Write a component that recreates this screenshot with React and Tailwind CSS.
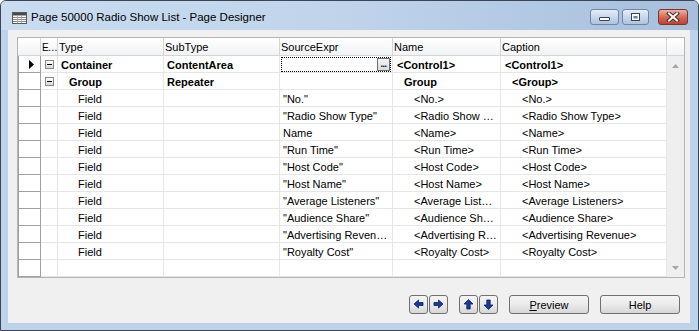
import React from "react";

const fieldRows = [
  ['"No."', "<No.>", "<No.>"],
  ['"Radio Show Type"', "<Radio Show …", "<Radio Show Type>"],
  ["Name", "<Name>", "<Name>"],
  ['"Run Time"', "<Run Time>", "<Run Time>"],
  ['"Host Code"', "<Host Code>", "<Host Code>"],
  ['"Host Name"', "<Host Name>", "<Host Name>"],
  ['"Average Listeners"', "<Average List…", "<Average Listeners>"],
  ['"Audience Share"', "<Audience Sh…", "<Audience Share>"],
  ['"Advertising Reven…', "<Advertising R…", "<Advertising Revenue>"],
  ['"Royalty Cost"', "<Royalty Cost>", "<Royalty Cost>"],
];

const cell =
  "shrink-0 h-full border-r border-b border-[#e6e6e6] bg-white flex items-center overflow-hidden whitespace-nowrap pt-[2px]";
const hcell =
  "shrink-0 h-full border-r border-b border-[#d5d5d5] flex items-center overflow-hidden whitespace-nowrap pl-[1px] pt-[1px]";

function ExpandBox() {
  return (
    <div className="w-[9px] h-[9px] border border-[#8a8a8a] bg-linear-to-b from-white to-[#d8d8d8] flex items-center justify-center">
      <div className="w-[5px] h-px bg-black" />
    </div>
  );
}

function GridRow({
  selected,
  expand,
  type,
  typePad,
  sub,
  src,
  name,
  namePad,
  cap,
  capPad,
  bold,
  focus,
}) {
  const b = bold ? "font-bold" : "";
  return (
    <div className="flex h-[17px]">
      <div className="w-[23px] shrink-0 h-full border-l border-r border-b border-[#a0a0a0] bg-white flex items-center justify-center pl-[3px]">
        {selected && (
          <svg width="5" height="9" viewBox="0 0 5 9">
            <polygon points="0,0 5,4.5 0,9" fill="#000" />
          </svg>
        )}
      </div>
      <div className="w-[17px] shrink-0 h-full border-r border-b border-[#e6e6e6] bg-white flex items-center justify-center">
        {expand && <ExpandBox />}
      </div>
      <div className={`w-[106px] ${cell} ${b} ${typePad}`}>{type}</div>
      <div className={`w-[116px] pl-[3px] ${cell} ${b}`}>{sub}</div>
      {focus ? (
        <div className="w-[113px] shrink-0 h-full border-r border-b border-[#e6e6e6] bg-white flex items-center pl-[1px] pr-[1px]">
          <div className="flex-1 h-[15px] border border-dotted border-black flex items-center justify-end">
            <div className="w-[13px] h-[13px] border border-[#707070] bg-linear-to-b from-[#f6f6f6] to-[#dadada] flex items-end justify-center">
              <span className="text-[9px] leading-[9px] font-bold tracking-[-0.5px] mb-[1px]">...</span>
            </div>
          </div>
        </div>
      ) : (
        <div className={`w-[113px] pl-[3px] ${cell}`}>{src}</div>
      )}
      <div className={`w-[108px] ${cell} ${b} ${namePad}`}>{name}</div>
      <div className={`w-[166px] ${cell} ${b} ${capPad}`}>{cap}</div>
    </div>
  );
}

function CaptionButton({ kind }) {
  if (kind === "close") {
    return (
      <div className="w-[30px] h-[16px] rounded-[3px] border border-[#7e3429] bg-linear-to-b from-[#eab1a5] via-[#d56a58] to-[#c0432f] flex items-center justify-center">
        <svg width="14" height="10" viewBox="0 0 14 10">
          <path d="M3 1.5 L11 8.5 M11 1.5 L3 8.5" stroke="#4a2a26" strokeWidth="4" strokeLinecap="square" />
          <path d="M3 1.5 L11 8.5 M11 1.5 L3 8.5" stroke="#ffffff" strokeWidth="2" strokeLinecap="square" />
        </svg>
      </div>
    );
  }
  return (
    <div
      className={`${kind === "min" ? "w-[29px]" : "w-[27px]"} h-[16px] rounded-[3px] border border-[#6f87a5] bg-linear-to-b from-[#e6eef8] via-[#c8d8ec] to-[#adc3df] flex items-center justify-center`}
    >
      {kind === "min" ? (
        <svg width="13" height="10" viewBox="0 0 13 10">
          <rect x="1.5" y="5.5" width="10" height="3" rx="0.5" fill="#ffffff" stroke="#33455c" />
        </svg>
      ) : (
        <svg width="11" height="10" viewBox="0 0 11 10">
          <rect x="1.5" y="1.5" width="8" height="7" fill="#ffffff" stroke="#33455c" />
          <rect x="3.5" y="4" width="4" height="2.5" fill="#6c7f98" />
        </svg>
      )}
    </div>
  );
}

function ArrowButton({ dir }) {
  const paths = {
    left: "M1 5 L5.5 1 L5.5 3.5 L10 3.5 L10 6.5 L5.5 6.5 L5.5 9 Z",
    right: "M10 5 L5.5 1 L5.5 3.5 L1 3.5 L1 6.5 L5.5 6.5 L5.5 9 Z",
    up: "M5.5 0.5 L1 5 L3.8 5 L3.8 10 L7.2 10 L7.2 5 L10 5 Z",
    down: "M5.5 10.5 L1 6 L3.8 6 L3.8 1 L7.2 1 L7.2 6 L10 6 Z",
  };
  return (
    <div className="w-[19px] h-[19px] rounded-[3px] border border-[#707070] bg-linear-to-b from-[#f4f4f4] via-[#ebebeb] to-[#d6d6d6] flex items-center justify-center">
      <svg width="11" height="11" viewBox="0 0 11 11">
        <path d={paths[dir]} fill="#1c3a9a" stroke="#0b1e5e" strokeWidth="0.8" strokeLinejoin="round" />
      </svg>
    </div>
  );
}

function PushButton({ children }) {
  return (
    <div className="w-[80px] h-[19px] rounded-[3px] border border-[#707070] bg-linear-to-b from-[#f4f4f4] via-[#ebebeb] to-[#d6d6d6] flex items-center justify-center text-[11px] text-black pt-[1px]">
      {children}
    </div>
  );
}

function TitleIcon() {
  return (
    <svg width="15" height="12" viewBox="0 0 15 12">
      <rect x="0.5" y="0.5" width="14" height="11" fill="#ffffff" stroke="#5a5a5a" />
      <rect x="1" y="1" width="13" height="2.5" fill="#4a4a4a" />
      <path d="M1 5.5 H14 M1 7.5 H14 M1 9.5 H14" stroke="#8c8c8c" strokeWidth="1" />
      <path d="M5.5 3.5 V11 M9.5 3.5 V11" stroke="#a8a8a8" strokeWidth="1" />
    </svg>
  );
}

export default function App() {
  return (
    <div className="w-[699px] h-[331px] bg-white overflow-hidden font-['Liberation_Sans',Arial,sans-serif] text-[11px] text-black">
      <div className="w-full h-full flex flex-col rounded-t-[6px] border border-[#3a4656] bg-[#bdd3ea]">
        {/* title bar */}
        <div className="h-[29px] shrink-0 flex items-center rounded-t-[5px] bg-linear-to-r from-[#c9dcf0] via-[#bfd4eb] to-[#a6bfdc] pl-[11px] pr-[10px]">
          <div className="mt-[5px]">
            <TitleIcon />
          </div>
          <div className="ml-[4px] text-[11.5px] mt-[5px]">Page 50000 Radio Show List - Page Designer</div>
          <div className="flex-1" />
          <div className="flex items-center gap-[3px] mt-[2px]">
            <CaptionButton kind="min" />
            <CaptionButton kind="max" />
            <div className="w-[3px]" />
            <CaptionButton kind="close" />
          </div>
        </div>
        {/* client */}
        <div className="flex-1 ml-[7px] mr-[8px] mb-[7px] bg-[#f0f0f0] flex flex-col pt-[7px] pl-[9px]">
          <div className="w-[668px] border border-[#b4b4b4] flex flex-col">
            {/* header */}
            <div className="flex h-[18px] bg-linear-to-b from-white to-[#f1f2f4]">
              <div className={`w-[23px] ${hcell}`} />
              <div className={`w-[17px] ${hcell} text-[10px] tracking-[-1px]`}>E…</div>
              <div className={`w-[106px] ${hcell}`}>Type</div>
              <div className={`w-[116px] ${hcell}`}>SubType</div>
              <div className={`w-[113px] ${hcell}`}>SourceExpr</div>
              <div className={`w-[108px] ${hcell}`}>Name</div>
              <div className={`w-[166px] ${hcell}`}>Caption</div>
              <div className="w-[17px] shrink-0 h-full border-b border-[#d5d5d5]" />
            </div>
            <div className="flex">
              <div className="flex flex-col">
                <GridRow
                  selected
                  expand
                  bold
                  focus
                  type="Container"
                  typePad="pl-[3px]"
                  sub="ContentArea"
                  name="<Control1>"
                  namePad="pl-[4px]"
                  cap="<Control1>"
                  capPad="pl-[4px]"
                />
                <GridRow
                  expand
                  bold
                  type="Group"
                  typePad="pl-[11px]"
                  sub="Repeater"
                  src=""
                  name="Group"
                  namePad="pl-[11px]"
                  cap="<Group>"
                  capPad="pl-[11px]"
                />
                {fieldRows.map((r, i) => (
                  <GridRow
                    key={i}
                    type="Field"
                    typePad="pl-[20px]"
                    sub=""
                    src={r[0]}
                    name={r[1]}
                    namePad="pl-[21px]"
                    cap={r[2]}
                    capPad="pl-[21px]"
                  />
                ))}
                <GridRow type="" typePad="" sub="" src="" name="" namePad="" cap="" capPad="" />
              </div>
              {/* scrollbar */}
              <div className="w-[17px] shrink-0 bg-[#efefef] flex flex-col items-center justify-between pt-[8px] pb-[7px]">
                <svg width="7" height="4" viewBox="0 0 7 4">
                  <polygon points="0,4 3.5,0 7,4" fill="#a6a6a6" />
                </svg>
                <svg width="7" height="4" viewBox="0 0 7 4">
                  <polygon points="0,0 3.5,4 7,0" fill="#a6a6a6" />
                </svg>
              </div>
            </div>
          </div>
          {/* buttons */}
          <div className="flex items-center mt-[17px] pl-[392px]">
            <ArrowButton dir="left" />
            <div className="w-[1px]" />
            <ArrowButton dir="right" />
            <div className="w-[11px]" />
            <ArrowButton dir="up" />
            <div className="w-[1px]" />
            <ArrowButton dir="down" />
            <div className="w-[11px]" />
            <PushButton>
              <span>
                <span className="underline">P</span>review
              </span>
            </PushButton>
            <div className="w-[11px]" />
            <PushButton>Help</PushButton>
          </div>
        </div>
      </div>
    </div>
  );
}
